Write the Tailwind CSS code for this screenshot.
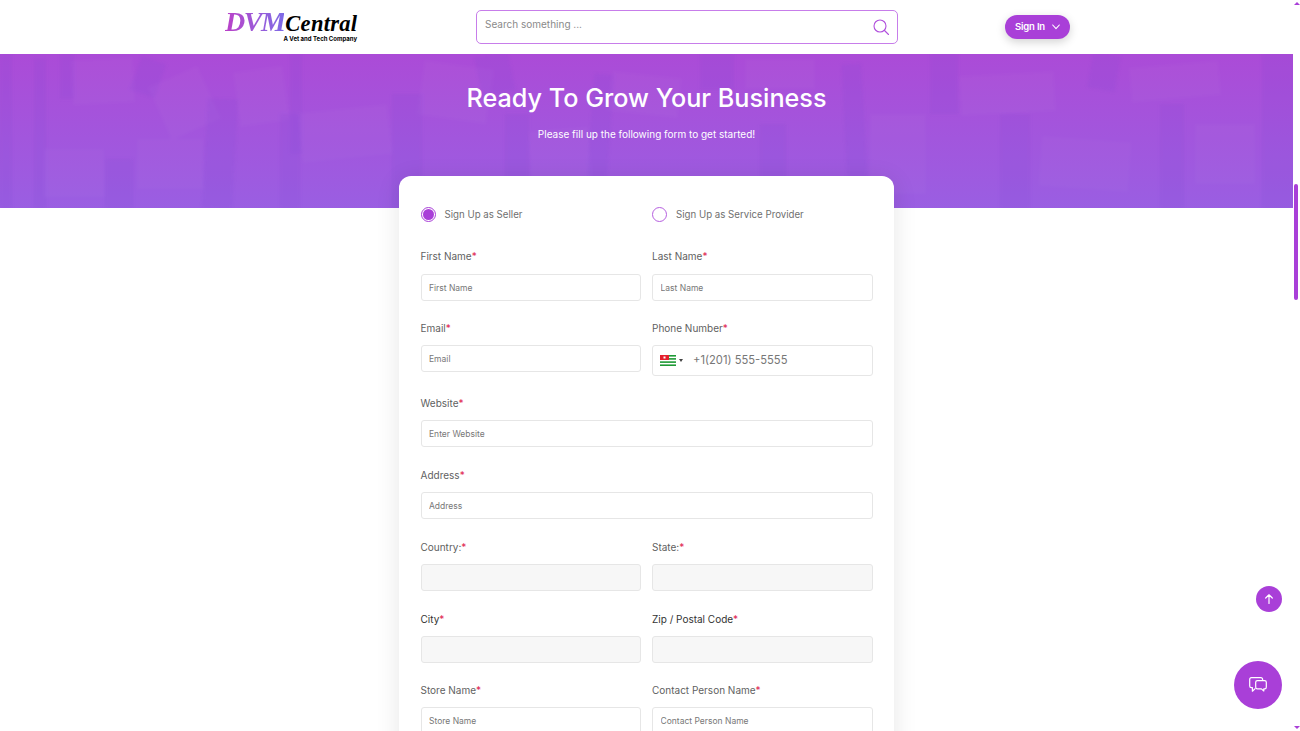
<!DOCTYPE html>
<html lang="en">
<head>
    <meta charset="UTF-8">
    <meta name="viewport" content="width=device-width, initial-scale=1.0">
    <title>Sign Up - DVM Central</title>
    <script src="https://cdn.jsdelivr.net/npm/@tailwindcss/browser@4"></script>
</head>
<body class="bg-white font-['Inter',sans-serif] text-[#5f5f5f]">
<div class="flex h-screen overflow-hidden">
    <div class="flex-1 min-w-0">

        <!-- header -->
        <header class="h-[54px] bg-white flex items-center">
            <a href="#" class="ml-[225px] mb-[2px] w-[132px] h-[30px] flex flex-col shrink-0 font-['Liberation_Serif',serif] italic font-bold">
                <span class="flex items-baseline h-[22px]">
                    <span class="text-[28px] leading-[22px] tracking-[-1.5px] bg-linear-to-r from-[#b93fc8] to-[#7d6ae6] bg-clip-text text-transparent">DVM</span>
                    <span class="ml-[1px] text-[22.5px] leading-[16px] text-black tracking-[0.3px]">Central</span>
                </span>
                <span class="self-end mt-[3px] font-['Inter',sans-serif] not-italic text-[6px] leading-[6px] text-black">A Vet and Tech Company</span>
            </a>
            <div class="ml-[119px] w-[422px] h-[34px] border border-[#c77dea] rounded-[5px] flex items-center pl-2 pr-[8px]">
                <input type="text" placeholder="Search something ..." class="flex-1 min-w-0 mb-[5px] text-[10px] outline-none placeholder:text-[#8a8a8a]">
                <svg class="w-[16px] h-[16px]" viewBox="0 0 16 16" fill="none" stroke="#b04fdc" stroke-width="1.1" stroke-linecap="round">
                    <circle cx="7" cy="7" r="6"/>
                    <path d="M11.5 11.5L15.5 15.5"/>
                </svg>
            </div>
            <button class="ml-[107px] w-[65px] h-[24px] rounded-full bg-[#a93fd8] text-white text-[9.5px] font-semibold tracking-[-0.2px] flex items-center justify-center gap-[7px] shadow-[0_3px_10px_rgba(0,0,0,0.18)]">
                Sign In
                <svg class="w-[8px] h-[6px]" viewBox="0 0 8 6" fill="none" stroke="white" stroke-width="1.1" stroke-linecap="round" stroke-linejoin="round"><path d="M0.7 1L4 4.7L7.3 1"/></svg>
            </button>
        </header>

        <!-- hero -->
        <section class="relative h-[154px] bg-linear-to-b from-[#ab4bd7] to-[#9a5ee2] overflow-hidden text-center text-white">
            <svg class="absolute inset-0 w-full h-full blur-[1.5px]" viewBox="0 0 1293 154" preserveAspectRatio="none" aria-hidden="true">
                <g fill="#6f3fd0" fill-opacity="0.09">
                    <rect x="0" y="0" width="12" height="154"/>
                    <rect x="34" y="5" width="12" height="149"/>
                    <rect x="105" y="105" width="28" height="49"/>
                    <rect x="60" y="0" width="14" height="45"/>
                    <rect x="135" y="5" width="26" height="36" transform="rotate(20 148 23)"/>
                    <rect x="205" y="45" width="30" height="109" transform="rotate(3 220 100)"/>
                    <rect x="280" y="60" width="20" height="94"/>
                    <rect x="290" y="0" width="12" height="100"/>
                    <rect x="392" y="40" width="30" height="114"/>
                    <rect x="478" y="0" width="34" height="40" transform="rotate(-12 495 20)"/>
                    <rect x="505" y="60" width="24" height="94"/>
                    <rect x="590" y="20" width="20" height="134" transform="rotate(4 600 80)"/>
                    <rect x="700" y="0" width="34" height="36"/>
                    <rect x="760" y="70" width="26" height="84"/>
                    <rect x="845" y="10" width="20" height="144" transform="rotate(-3 855 80)"/>
                    <rect x="930" y="0" width="28" height="60"/>
                    <rect x="1000" y="60" width="30" height="94"/>
                    <rect x="1090" y="0" width="28" height="36" transform="rotate(10 1104 18)"/>
                    <rect x="1160" y="50" width="24" height="104"/>
                    <rect x="1262" y="0" width="31" height="154"/>
                </g>
                <g fill="#ffffff" fill-opacity="0.025">
                    <rect x="72" y="5" width="62" height="45" transform="rotate(-3 100 28)"/>
                    <rect x="44" y="95" width="60" height="48"/>
                    <rect x="158" y="20" width="54" height="58" transform="rotate(-24 185 50)"/>
                    <rect x="236" y="15" width="50" height="55" transform="rotate(-8 260 40)"/>
                    <rect x="137" y="85" width="66" height="50"/>
                    <rect x="300" y="55" width="90" height="50" transform="rotate(-6 340 80)"/>
                    <rect x="420" y="10" width="70" height="55" transform="rotate(8 450 40)"/>
                    <rect x="530" y="75" width="60" height="60" transform="rotate(-4 560 100)"/>
                    <rect x="610" y="20" width="70" height="40" transform="rotate(6 640 40)"/>
                    <rect x="745" y="5" width="70" height="30"/>
                    <rect x="870" y="60" width="56" height="80"/>
                    <rect x="960" y="20" width="95" height="40" transform="rotate(-3 1000 40)"/>
                    <rect x="1040" y="85" width="90" height="50" transform="rotate(4 1085 110)"/>
                    <rect x="1130" y="10" width="90" height="35" transform="rotate(-5 1175 28)"/>
                    <rect x="1195" y="70" width="60" height="60"/>
                </g>
            </svg>
            <h1 class="relative pt-[26px] text-[25.2px] leading-[36px] font-medium">Ready To Grow Your Business</h1>
            <p class="relative mt-[10px] text-[10px] leading-[16px]">Please fill up the following form to get started!</p>
        </section>

        <!-- form card -->
        <main class="relative z-10 -mt-[32px] ml-[399px] w-[495px] h-[700px] bg-white rounded-[12px] shadow-[0_4px_24px_rgba(0,0,0,0.10)] px-[21.5px] pt-[30px] text-[10px]">
            <form>
                <div class="grid grid-cols-2 gap-x-[11px] h-[17px] items-center text-[9.7px] text-[#6f6f6f]">
                    <label class="flex items-center gap-[9px] h-[17px]">
                        <span class="w-[15px] h-[15px] rounded-full border border-[#a93fd8] flex items-center justify-center">
                            <span class="w-[11px] h-[11px] rounded-full bg-[#a93fd8]"></span>
                        </span>
                        <span class="mt-[2px]">Sign Up as Seller</span>
                    </label>
                    <label class="flex items-center gap-[9px] h-[17px]">
                        <span class="w-[15px] h-[15px] rounded-full border border-[#b65fe0]"></span>
                        <span class="mt-[2px]">Sign Up as Service Provider</span>
                    </label>
                </div>

                <div class="grid grid-cols-2 gap-x-[11px] mt-[26px]">
                    <div>
                        <label class="block leading-[14px]">First Name<span class="text-[#e0244f]">*</span></label>
                        <input type="text" placeholder="First Name" class="mt-[11px] block w-full h-[27px] border border-[#e6e6e6] rounded-[3px] px-[7.5px] text-[8.5px] outline-none placeholder:text-[#777]">
                    </div>
                    <div>
                        <label class="block leading-[14px]">Last Name<span class="text-[#e0244f]">*</span></label>
                        <input type="text" placeholder="Last Name" class="mt-[11px] block w-full h-[27px] border border-[#e6e6e6] rounded-[3px] px-[7.5px] text-[8.5px] outline-none placeholder:text-[#777]">
                    </div>
                </div>

                <div class="grid grid-cols-2 gap-x-[11px] mt-[20px] items-start">
                    <div>
                        <label class="block leading-[14px]">Email<span class="text-[#e0244f]">*</span></label>
                        <input type="text" placeholder="Email" class="mt-[10px] block w-full h-[27px] border border-[#e6e6e6] rounded-[3px] px-[7.5px] text-[8.5px] outline-none placeholder:text-[#777]">
                    </div>
                    <div>
                        <label class="block leading-[14px]">Phone Number<span class="text-[#e0244f]">*</span></label>
                        <div class="mt-[10px] h-[31px] border border-[#e6e6e6] rounded-[3px] flex items-center pl-[7px]">
                            <svg class="w-[16px] h-[11px] shrink-0" viewBox="0 0 16 11" aria-hidden="true">
                                <rect width="16" height="11" fill="#fff"/>
                                <rect y="0" width="16" height="1.6" fill="#1e9a35"/>
                                <rect y="3.1" width="16" height="1.6" fill="#1e9a35"/>
                                <rect y="6.3" width="16" height="1.6" fill="#1e9a35"/>
                                <rect y="9.4" width="16" height="1.6" fill="#1e9a35"/>
                                <rect width="9" height="5" fill="#e4212e"/>
                                <rect x="3.5" y="1.5" width="2" height="2" fill="#fff"/>
                            </svg>
                            <span class="ml-[3px] w-0 h-0 border-x-[2px] border-x-transparent border-t-[3px] border-t-[#444]"></span>
                            <input type="text" readonly value="+1(201) 555-5555" class="ml-[10px] flex-1 min-w-0 text-[11.2px] text-[#777] outline-none">
                        </div>
                    </div>
                </div>

                <div class="mt-[20px]">
                    <label class="block leading-[14px]">Website<span class="text-[#e0244f]">*</span></label>
                    <input type="text" placeholder="Enter Website" class="mt-[10px] block w-full h-[27px] border border-[#e6e6e6] rounded-[3px] px-[7.5px] text-[8.5px] outline-none placeholder:text-[#777]">
                </div>

                <div class="mt-[21px]">
                    <label class="block leading-[14px]">Address<span class="text-[#e0244f]">*</span></label>
                    <input type="text" placeholder="Address" class="mt-[10px] block w-full h-[27px] border border-[#e6e6e6] rounded-[3px] px-[7.5px] text-[8.5px] outline-none placeholder:text-[#777]">
                </div>

                <div class="grid grid-cols-2 gap-x-[11px] mt-[21px]">
                    <div>
                        <label class="block leading-[14px]">Country:<span class="text-[#e0244f]">*</span></label>
                        <input type="text" disabled class="mt-[10px] block w-full h-[27px] border border-[#e6e6e6] rounded-[3px] bg-[#f7f7f7]">
                    </div>
                    <div>
                        <label class="block leading-[14px]">State:<span class="text-[#e0244f]">*</span></label>
                        <input type="text" disabled class="mt-[10px] block w-full h-[27px] border border-[#e6e6e6] rounded-[3px] bg-[#f7f7f7]">
                    </div>
                </div>

                <div class="grid grid-cols-2 gap-x-[11px] mt-[21px] text-[#333]">
                    <div>
                        <label class="block leading-[14px]">City<span class="text-[#e0244f]">*</span></label>
                        <input type="text" disabled class="mt-[10px] block w-full h-[27px] border border-[#e6e6e6] rounded-[3px] bg-[#f7f7f7]">
                    </div>
                    <div>
                        <label class="block leading-[14px]">Zip / Postal Code<span class="text-[#e0244f]">*</span></label>
                        <input type="text" disabled class="mt-[10px] block w-full h-[27px] border border-[#e6e6e6] rounded-[3px] bg-[#f7f7f7]">
                    </div>
                </div>

                <div class="grid grid-cols-2 gap-x-[11px] mt-[20px]">
                    <div>
                        <label class="block leading-[14px]">Store Name<span class="text-[#e0244f]">*</span></label>
                        <input type="text" placeholder="Store Name" class="mt-[10px] block w-full h-[27px] border border-[#e6e6e6] rounded-[3px] px-[7.5px] text-[8.5px] outline-none placeholder:text-[#777]">
                    </div>
                    <div>
                        <label class="block leading-[14px]">Contact Person Name<span class="text-[#e0244f]">*</span></label>
                        <input type="text" placeholder="Contact Person Name" class="mt-[10px] block w-full h-[27px] border border-[#e6e6e6] rounded-[3px] px-[7.5px] text-[8.5px] outline-none placeholder:text-[#777]">
                    </div>
                </div>
            </form>
        </main>
    </div>

    <!-- page scrollbar -->
    <aside class="w-[7px] shrink-0 bg-white flex flex-col items-center justify-between py-[2px] relative">
        <span class="w-0 h-0 border-x-[3px] border-x-transparent border-b-[3px] border-b-[#a93fd8]"></span>
        <span class="absolute top-[184px] left-[1px] w-[4px] h-[116px] rounded-full bg-[#a93fd8]"></span>
        <span class="w-0 h-0 border-x-[3px] border-x-transparent border-t-[3px] border-t-[#a93fd8]"></span>
    </aside>
</div>

<!-- floating buttons -->
<button class="fixed left-[1256px] top-[586px] z-20 w-[26px] h-[26px] rounded-full bg-[#a93fd8] flex items-center justify-center" aria-label="Back to top">
    <svg class="w-[10px] h-[10px]" viewBox="0 0 10 10" fill="none" stroke="white" stroke-width="1.2" stroke-linecap="round" stroke-linejoin="round"><path d="M5 9.5V1M1.7 4L5 .8L8.3 4"/></svg>
</button>
<button class="fixed left-[1234px] top-[661px] z-20 w-[48px] h-[48px] rounded-full bg-[#a93fd8] flex items-center justify-center" aria-label="Chat">
    <svg class="w-[18px] h-[16px]" viewBox="0 0 18 16" fill="none" stroke="white" stroke-width="1.2" stroke-linejoin="round">
        <path d="M13.6 3.6V2.4Q13.6 .7 11.9 .7H2.4Q.7 .7 .7 2.4V9Q.7 10.7 2.4 10.7H3.4V14.2L6.4 11.4"/>
        <path d="M8.4 3.6H15.6Q17.3 3.6 17.3 5.3V10.2Q17.3 11.9 15.6 11.9H14.8V14L12.4 11.9H8.4Q6.7 11.9 6.7 10.2V5.3Q6.7 3.6 8.4 3.6Z"/>
    </svg>
</button>
</body>
</html>
